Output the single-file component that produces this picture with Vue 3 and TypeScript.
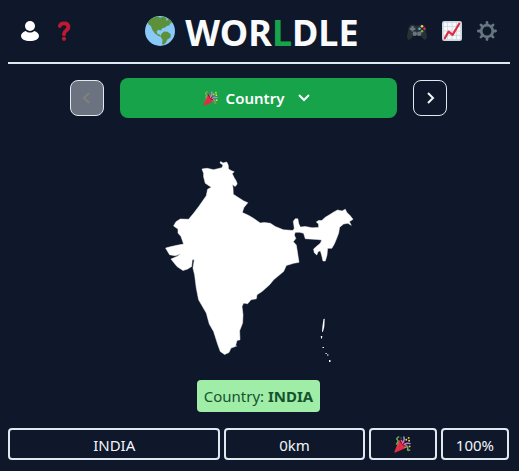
<script setup lang="ts">
import { ref } from 'vue'

interface Guess {
  name: string
  distance: string
  percent: string
}

const guesses = ref<Guess[]>([{ name: 'INDIA', distance: '0km', percent: '100%' }])
const answer = 'INDIA'
</script>

<template>
  <svg class="defs" aria-hidden="true">
    <symbol id="popper" viewBox="0 0 36 36">
      <path fill="#dd2e44" d="M11.6 8.4 1 32.9c-.7 1.6.5 2.8 2.1 2.1l24.5-10.6c2.300-4.500-11-18.500-16-16z" />
      <path fill="#ea596e" d="M11 10.500 2.400 30l5.500-9.500c2-3.500 3-6 3.100-10z" />
      <path fill="#a0041e" d="M12 8.300c4-1 17 12 15.700 16-3.700 1.200-17-12-15.700-16z" />
      <path fill="none" stroke="#aa8dd8" stroke-width="3" stroke-linecap="round" d="M18 15c4-5 5-8 3-13M22 18c4-3 6-4 12-2" />
      <path fill="none" stroke="#77b255" stroke-width="3" stroke-linecap="round" d="M6 16c3-3 4-6 1-8s1-5 3-6M23 24c5-2 7-1 6 3s2 4 4 3" />
      <path fill="none" stroke="#aa8dd8" stroke-width="2" d="m17 13-1-5m8 12 5 1" />
      <path fill="#5c913b" d="M4 16h4v3H4zm26 12h4v4h-4z" />
      <circle cx="26" cy="8" r="2" fill="#ffcc4d" /><circle cx="31" cy="4" r="2" fill="#ffcc4d" />
      <circle cx="32" cy="10" r="2" fill="#ffcc4d" /><circle cx="15" cy="4" r="1.500" fill="#5c913b" />
      <circle cx="33" cy="22" r="2" fill="#ffcc4d" />
    </symbol>
  </svg>

  <div class="page">
    <header class="header">
      <nav class="icons" aria-label="Player">
        <button class="icon-btn" type="button" aria-label="Profile">
          <svg width="24" height="24" viewBox="0 0 24 24" fill="#fff">
            <circle cx="12" cy="7" r="5" />
            <path d="M3 17c0-2.400 2-4.200 4.800-5 2.500 2 5.900 2 8.400 0 2.800.8 4.800 2.600 4.800 5 0 3-4 5-9 5s-9-2-9-5z" />
          </svg>
        </button>
        <button class="icon-btn" type="button" aria-label="Help">
          <svg width="20" height="20" viewBox="0 0 36 36">
            <path fill="none" stroke="#be1931" stroke-width="7" stroke-linecap="round" d="M10.500 9c1-3.500 4-4.700 7.500-4.700 5 0 8 2.500 8 6.700 0 6-8 6-8 12v1" />
            <circle cx="18" cy="32" r="3.800" fill="#be1931" />
          </svg>
        </button>
      </nav>

      <h1 class="title">
        <svg class="globe" width="30" height="30" viewBox="0 0 36 36" aria-hidden="true">
          <circle cx="18" cy="18" r="18" fill="#88c9f9" />
          <path fill="#5c913b" d="M3.500 7.500C7 3 11 .9 15 .6l3 1.400 4-1 4 1.500-1 2.500 3 .500 2.500 3-1.500 3-3 .500-2 2-3 .500-2 3-3-1-2 2 1 3 3 1 1 2-3-.5-4-3-3-4-2-5-3-2z" />
          <path fill="#5c913b" d="m20 21 3-2.500 4 .3 4 3.200-.5 4-3.500 2-2 4-3 2.500-1.500-1 .5-5-2.500-4zM27 3l3 1.500 2.500 3-2 1.500-3-3z" />
        </svg>
        <span>WOR<span class="accent">L</span>DLE</span>
      </h1>

      <nav class="icons icons-end" aria-label="Options">
        <button class="icon-btn" type="button" aria-label="Games">
          <svg width="20" height="20" viewBox="0 0 36 36">
            <path fill="#292f33" d="M3 12C4 6 11 5 14 8h8c3-3 10-2 11 4l3 15c0 7-4 8-7 5l-5-6H12l-5 6c-3 3-7 2-7-5z" />
            <path fill="#66757f" d="M8 9h4v3h3v4h-3v3H8v-3H5v-4h3z" />
            <circle cx="14" cy="23" r="4" fill="#66757f" /><circle cx="22" cy="23" r="4" fill="#66757f" />
            <circle cx="27" cy="9.500" r="2.300" fill="#ffcc4d" /><circle cx="31.500" cy="14" r="2.300" fill="#dd2e44" />
            <circle cx="22.500" cy="14" r="2.300" fill="#55acee" /><circle cx="27" cy="18.500" r="2.300" fill="#77b255" />
          </svg>
        </button>
        <button class="icon-btn" type="button" aria-label="Statistics">
          <svg width="20" height="20" viewBox="0 0 36 36">
            <rect width="36" height="36" rx="4" fill="#ccd6dd" />
            <rect x="3" y="3" width="30" height="30" fill="#f5f8fa" />
            <path fill="none" stroke="#ccd6dd" stroke-width="1.500" d="M10 2v32M18 2v32M26 2v32M2 10h32M2 18h32M2 26h32" />
            <path fill="none" stroke="#dd2e44" stroke-width="4" stroke-linecap="round" stroke-linejoin="round" d="m5 31 7-12 7 6L31 5" />
          </svg>
        </button>
        <button class="icon-btn" type="button" aria-label="Settings">
          <svg width="20" height="20" viewBox="0 0 36 36" fill="none" stroke="#66757f">
            <circle cx="18" cy="18" r="10.500" stroke-width="5" />
            <path stroke-width="5" stroke-linecap="round" d="M18 2.500V7m0 22v4.500M2.500 18H7m22 0h4.500M7 7l3.200 3.200m15.600 15.600L29 29M7 29l3.200-3.200M25.800 10.200 29 7" />
          </svg>
        </button>
      </nav>
    </header>

    <main class="main">
      <div class="rounds">
        <button class="step" type="button" aria-label="Previous round" disabled>
          <svg width="16" height="16" viewBox="0 0 16 16"><path d="M10 3 5 8l5 5" /></svg>
        </button>
        <button class="round" type="button">
          <svg width="15" height="15" aria-hidden="true"><use href="#popper" /></svg>
          <span>Country</span>
          <svg class="chevron" width="16" height="16" viewBox="0 0 16 16"><path d="m3 5 5 5 5-5" /></svg>
        </button>
        <button class="step" type="button" aria-label="Next round">
          <svg width="16" height="16" viewBox="0 0 16 16"><path d="m6 3 5 5-5 5" /></svg>
        </button>
      </div>

      <svg class="map" width="200" height="210" viewBox="159 155 200 210" role="img" aria-label="Country outline">
        <path stroke="#fff" stroke-width=".5" d="M220.700 161.500 223 163l3.700-1 1.500 3 .3 4 3 1.700 2.700 1-2 2 2 4 2 3.300 1 3-2 2.500-2.700-2 .500 3.500.3 6.300 5 3.200 5.500 3.500 4 1.700-4 5-1.500 4.800 6.500 3 5 3 6.500 4.500 4-.500 6 .800 5 3.200 8 3.300 9.700.7 1.300-2.200-1-7 2-2.500h2.500l1 5 1.500 3.300 5-.6 6.700 1.300 6.600-.3V224l-2.300-2 2.300-1.500h3.200l3.500-3.200 5-3 4-2.600 3.300-1.700 4.400 1 3.300-1.700 1.700 3.400 2.600 2.300 3.400 4.300-3.700 2.400 2 3.600-3.500-2-4.200.7-4 3.300-1 6-2.300 6-2 4.700-2.500 4.300h-4.200l-.6 6.700-1.700 6h-2.300l-1.400-6-1.300-4.300-2.300 1-1.200 3.300-2.500-2.300-.7-3.700 3.400-3 3.300-2.700 1.500-3.300-4-.5-12.500-.8-1.700-5.400-4-1-4.300 0-1 2.700 1.500 3.500-2.500 3.200 3 3.300 1.300 8.300 1.400 9-5.400 1-7.300 2.200-2.700 6-10 8.300-4 5-7.600 6.700-5 3.300-.7 4-5.300 1-3.400 4-4-.7-1.600 3.400 1 8.300-.4 8.300-3 7.700.4 9-3 .600-1.700 6.100-4.300 1.600-2 4.400-4.400 2-4.300-3-2.700-7.400-4-12.600-4.300-7.400-3-11-7.700-13.300-2.300-11.700-1.700-13.300-1.600-6.700 1.300-8.300-2-.3-.7 7-4 2.600-4.600 1.400-6-4-6-7.400 6-2.600 4-2.700-5.700 2-5.700-1-4-6.700 4.700-1.300 6.700-1.500 6.600-1.200-2.600-7.600-3-3.400V229l-4.400-3 2.400-4.300 4.300-2.700 8.300.3 5-6 5-6.600 7.700-11 1.300-6.400 3.700-2-6-4-1.700-6.600v-3.400l-1.600-4.300 5-.7 6.600 1.400 8.400-2 1-2.700-3-2z" />
        <path d="m323.500 319 1.200-.2-.4 8-1.300 5h-1l.5-6zM320.800 336h1.500l-.3 2.500h-1zM322.500 347h1.500v1h-1.500zM325.500 353h1.200v1h-1.200zM327 354.500h1.500v1H327zM329 360h1.500v2H329zM235.500 345.500h1.200v1h-1.200z" />
      </svg>

      <p class="answer">Country: <strong>{{ answer }}</strong></p>

      <div v-for="guess in guesses" :key="guess.name" class="guess">
        <span class="cell name">{{ guess.name }}</span>
        <span class="cell distance">{{ guess.distance }}</span>
        <span class="cell">
          <svg width="17" height="17" role="img" aria-label="Correct"><use href="#popper" /></svg>
        </span>
        <span class="cell">{{ guess.percent }}</span>
      </div>
    </main>
  </div>
</template>

<style>
body {
  background: #0f172a;
}
</style>

<style scoped>
.defs {
  position: absolute;
  width: 0;
  height: 0;
}
.page {
  padding: 0 9px 0 8px;
  color: #f1f5f9;
  font: 15px/24px "Segoe UI", "Noto Sans", sans-serif;
}
button {
  margin: 0;
  padding: 0;
  border: 0;
  background: none;
  color: inherit;
  font: inherit;
  cursor: pointer;
}
svg {
  display: block;
  flex: none;
}
.header {
  display: grid;
  grid-template-columns: 1fr auto 1fr;
  align-items: center;
  height: 62px;
  border-bottom: 2px solid #e2e8f0;
}
.icons {
  display: flex;
  align-items: center;
  gap: 12px;
  padding: 0 10px;
}
.icons-end {
  justify-content: flex-end;
  gap: 15px;
  padding: 0 13px 0 0;
}
.title {
  display: flex;
  align-items: center;
  gap: 10px;
  margin: 0;
  padding: 4px 14px 0 0;
  color: #f8fafc;
  font-size: 36px;
  line-height: 58px;
  font-weight: 700;
}
.globe {
  margin-bottom: 4px;
}
.accent {
  color: #16a34a;
}
.main {
  display: flex;
  flex-direction: column;
  align-items: center;
  padding: 14px 1px 0 0;
}
.rounds {
  display: flex;
  align-items: center;
  align-self: stretch;
  gap: 16px;
  padding: 0 62px;
}
.step {
  display: grid;
  place-items: center;
  box-sizing: border-box;
  width: 34px;
  height: 36px;
  border: 1px solid #e2e8f0;
  border-radius: 8px;
}
.step:disabled {
  background: #6b7280;
  color: #82807c;
  cursor: default;
}
.step path,
.chevron path {
  fill: none;
  stroke: currentColor;
  stroke-width: 2;
}
.round {
  display: flex;
  flex: 1;
  align-items: center;
  justify-content: center;
  gap: 8px;
  height: 40px;
  padding-right: 2px;
  border-radius: 8px;
  background: #16a34a;
  color: #fff;
  font-weight: 600;
}
.chevron {
  margin-left: 4px;
}
.map {
  margin-top: 37px;
  fill: #fff;
}
.answer {
  margin: 15px 0 16px;
  padding: 4px 7px;
  border-radius: 4px;
  background: #a0eda8;
  color: #14532d;
}
.guess {
  display: grid;
  grid-template-columns: repeat(7, 1fr);
  align-self: stretch;
  gap: 4px;
}
.cell {
  display: flex;
  align-items: center;
  justify-content: center;
  box-sizing: border-box;
  height: 32px;
  padding-top: 1px;
  border: 2px solid #e2e8f0;
  border-radius: 4px;
}
.name {
  grid-column: span 3;
}
.distance {
  grid-column: span 2;
}
</style>
